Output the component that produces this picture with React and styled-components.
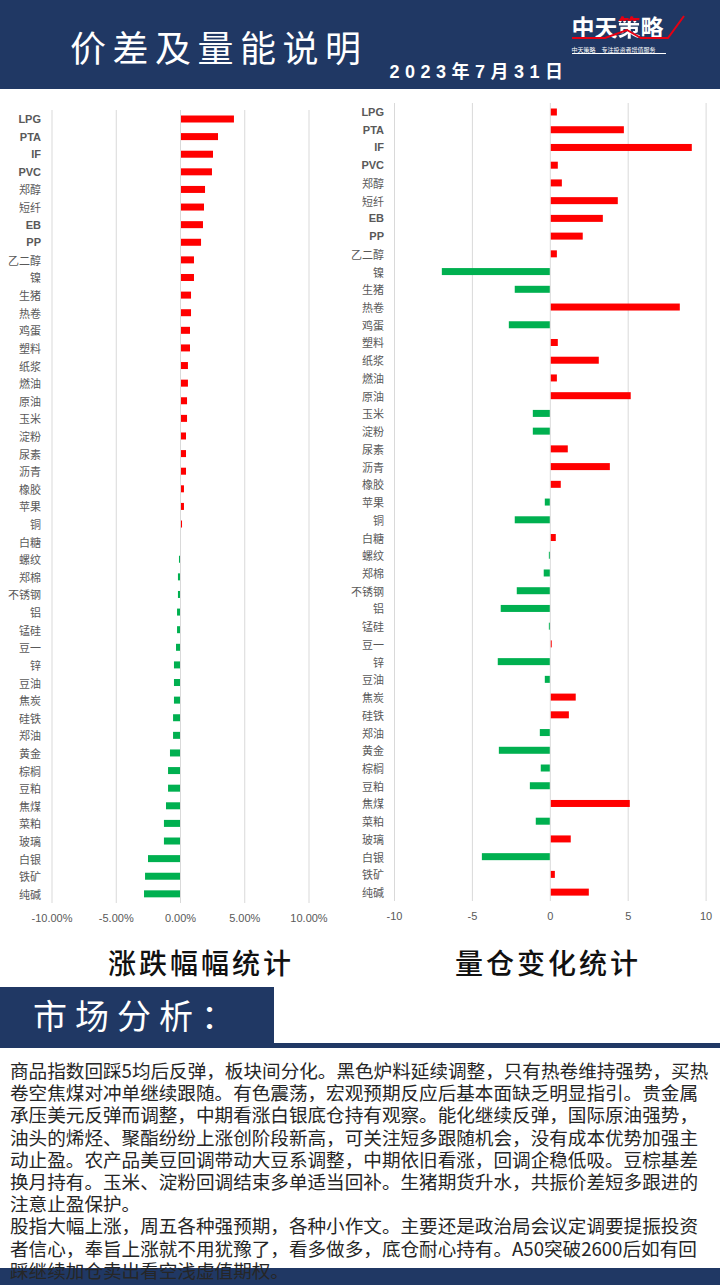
import React from 'react';
import styled, { createGlobalStyle } from 'styled-components';

const NAVY = '#203864';

const GlobalStyle = createGlobalStyle`
  html, body { margin: 0; padding: 0; background: #fff; }
  body { font-family: "Noto Sans CJK SC", "Noto Sans", sans-serif; }
`;

const ITEMS = ['LPG','PTA','IF','PVC','郑醇','短纤','EB','PP','乙二醇','镍','生猪','热卷','鸡蛋','塑料','纸浆','燃油','原油','玉米','淀粉','尿素','沥青','橡胶','苹果','铜','白糖','螺纹','郑棉','不锈钢','铝','锰硅','豆一','锌','豆油','焦炭','硅铁','郑油','黄金','棕榈','豆粕','焦煤','菜粕','玻璃','白银','铁矿','纯碱'];

const CHANGE = [4.12,2.88,2.49,2.41,1.87,1.79,1.71,1.56,1.01,1.01,0.78,0.78,0.7,0.7,0.54,0.54,0.47,0.47,0.39,0.39,0.39,0.23,0.23,0.08,0,-0.08,-0.16,-0.16,-0.23,-0.23,-0.31,-0.47,-0.47,-0.47,-0.54,-0.54,-0.78,-0.93,-0.93,-1.09,-1.25,-1.25,-2.49,-2.72,-2.8];

const VOLUME = [0.39,4.69,9.05,0.45,0.71,4.3,3.34,2.05,0.39,-6.93,-2.25,8.28,-2.63,0.45,3.08,0.39,5.13,-1.09,-1.09,1.09,3.79,0.64,-0.32,-2.25,0.32,-0.06,-0.39,-2.12,-3.15,-0.06,0.06,-3.34,-0.32,1.6,1.16,-0.64,-3.27,-0.58,-1.28,5.07,-0.9,1.28,-4.36,0.26,2.44];

const LEFT_CHART = {
  viewX: 0,
  zero: 180.5,
  scale: 12.85,
  first: 119,
  pitch: 17.61,
  top: 110,
  bottom: 903,
  labelX: 41,
  tickY: 918,
  ticks: [
    { v: -10, label: '-10.00%' },
    { v: -5, label: '-5.00%' },
    { v: 0, label: '0.00%' },
    { v: 5, label: '5.00%' },
    { v: 10, label: '10.00%' },
  ],
  values: CHANGE,
};

const RIGHT_CHART = {
  viewX: 360,
  zero: 550.3,
  scale: 15.58,
  first: 112,
  pitch: 17.73,
  top: 103,
  bottom: 901,
  labelX: 384,
  tickY: 916,
  ticks: [
    { v: -10, label: '-10' },
    { v: -5, label: '-5' },
    { v: 0, label: '0' },
    { v: 5, label: '5' },
    { v: 10, label: '10' },
  ],
  values: VOLUME,
};

const Page = styled.div`
  width: 720px;
  height: 1285px;
  overflow: hidden;
  display: flex;
  flex-direction: column;
  background: #fff;
`;

const Header = styled.header`
  height: 89px;
  flex-shrink: 0;
  background: ${NAVY};
  display: flex;
  align-items: flex-start;
`;

const Title = styled.h1`
  margin: 26px 0 0 70px;
  font-size: 36px;
  line-height: 40px;
  font-weight: 400;
  letter-spacing: 6.5px;
  color: #fff;
  white-space: nowrap;
`;

const DateText = styled.div`
  margin: 62px 0 0 22px;
  font-family: "Liberation Sans", "Noto Sans CJK SC", sans-serif;
  font-weight: 700;
  font-size: 18px;
  line-height: 20px;
  letter-spacing: 5.5px;
  color: #fff;
  white-space: nowrap;
`;

const Logo = styled.div`
  position: relative;
  margin: 13px 34px 0 auto;
  width: 118px;
  height: 44px;
  padding-left: 3px;
  box-sizing: border-box;
`;

const LogoMark = styled.div`
  font-size: 23px;
  line-height: 26px;
  font-weight: 700;
  color: #fff;
  white-space: nowrap;
`;

const LogoAccent = styled.span`
  background: linear-gradient(to bottom, #e60012 0 34%, #fff 34%);
  -webkit-background-clip: text;
  background-clip: text;
  color: transparent;
`;

const LogoLine = styled.svg`
  position: absolute;
  left: 0;
  top: 0;
  width: 118px;
  height: 44px;
  overflow: visible;
`;

const LogoTagline = styled.div`
  margin-top: 7px;
  width: 94px;
  font-size: 6px;
  line-height: 7px;
  color: #fff;
  white-space: nowrap;
  border-bottom: 1px solid #fff;
`;

const ChartsRow = styled.section`
  display: flex;
  flex-shrink: 0;
`;

const ChartPanel = styled.div`
  width: 360px;
  display: flex;
  flex-direction: column;
`;

const ChartSvg = styled.svg`
  display: block;
  width: 360px;
  height: 846px;
  overflow: visible;
`;

const ChartTitle = styled.h2`
  margin: 0;
  padding: 7px 0 0 ${(p) => p.$indent}px;
  font-size: 28px;
  line-height: 40px;
  letter-spacing: 3px;
  font-weight: 500;
  color: #111;
  white-space: nowrap;
`;

const SectionBar = styled.div`
  margin-top: 5px;
  height: 61px;
  box-sizing: border-box;
  border-bottom: 5px solid ${NAVY};
  display: flex;
  flex-shrink: 0;
`;

const SectionTitle = styled.h2`
  margin: 0;
  width: 274px;
  box-sizing: border-box;
  padding-left: 33px;
  background: ${NAVY};
  color: #fff;
  font-size: 34px;
  line-height: 56px;
  font-weight: 400;
  letter-spacing: 8px;
  white-space: nowrap;
`;

const Analysis = styled.section`
  position: relative;
  z-index: 1;
  height: 220px;
  flex-shrink: 0;
  box-sizing: border-box;
  padding: 11px 7px 0 10px;
`;

const Paragraph = styled.p`
  margin: 0;
  font-size: 18.6px;
  line-height: 22.2px;
  color: #262626;
`;

const Footer = styled.footer`
  height: 17px;
  flex-shrink: 0;
  background: ${NAVY};
`;

function BarChart({ config }) {
  const { viewX, zero, scale, first, pitch, top, bottom, labelX, tickY, ticks, values } = config;
  return (
    <ChartSvg viewBox={`${viewX} 89 360 846`}>
      {ticks.map((t) => (
        <line
          key={`g${t.v}`}
          x1={zero + t.v * scale}
          x2={zero + t.v * scale}
          y1={top}
          y2={bottom}
          stroke="#d9d9d9"
          strokeWidth="1"
        />
      ))}
      {ITEMS.map((name, i) => {
        const cy = first + i * pitch;
        const v = values[i];
        const w = Math.abs(v) * scale;
        const latin = /^[A-Z]+$/.test(name);
        return (
          <g key={name}>
            <text
              x={labelX}
              y={cy}
              textAnchor="end"
              dominantBaseline="central"
              fontSize="11"
              fontWeight={latin ? 700 : 400}
              fill="#595959"
              fontFamily={latin ? '"Liberation Sans", sans-serif' : '"Noto Sans CJK SC", sans-serif'}
            >
              {name}
            </text>
            {v !== 0 && (
              <rect
                x={v > 0 ? zero + 0.5 : zero - 0.5 - w}
                y={cy - 3.5}
                width={Math.max(w, 0.8)}
                height="7"
                fill={v > 0 ? '#ff0000' : '#00b050'}
              />
            )}
          </g>
        );
      })}
      {ticks.map((t) => (
        <text
          key={`t${t.v}`}
          x={zero + t.v * scale}
          y={tickY}
          textAnchor="middle"
          dominantBaseline="central"
          fontSize="11"
          fill="#595959"
          fontFamily='"Liberation Sans", sans-serif'
        >
          {t.label}
        </text>
      ))}
    </ChartSvg>
  );
}

export default function App() {
  return (
    <Page>
      <GlobalStyle />
      <Header>
        <Title>价差及量能说明</Title>
        <DateText>2023年7月31日</DateText>
        <Logo>
          <LogoMark>
            中天<LogoAccent>策</LogoAccent>略
          </LogoMark>
          <LogoTagline>中天策略　专注投资者增值服务</LogoTagline>
          <LogoLine viewBox="0 0 118 44">
            <polyline
              points="3,25 36,25 58,17 72,25 99,25 115,3"
              fill="none"
              stroke="#e60012"
              strokeWidth="2"
              strokeLinejoin="miter"
            />
          </LogoLine>
        </Logo>
      </Header>

      <ChartsRow>
        <ChartPanel>
          <BarChart config={LEFT_CHART} />
          <ChartTitle $indent={108}>涨跌幅幅统计</ChartTitle>
        </ChartPanel>
        <ChartPanel>
          <BarChart config={RIGHT_CHART} />
          <ChartTitle $indent={95}>量仓变化统计</ChartTitle>
        </ChartPanel>
      </ChartsRow>

      <SectionBar>
        <SectionTitle>市场分析：</SectionTitle>
      </SectionBar>

      <Analysis>
        <Paragraph>
          商品指数回踩5均后反弹，板块间分化。黑色炉料延续调整，只有热卷维持强势，买热卷空焦煤对冲单继续跟随。有色震荡，宏观预期反应后基本面缺乏明显指引。贵金属承压美元反弹而调整，中期看涨白银底仓持有观察。能化继续反弹，国际原油强势，油头的烯烃、聚酯纷纷上涨创阶段新高，可关注短多跟随机会，没有成本优势加强主动止盈。农产品美豆回调带动大豆系调整，中期依旧看涨，回调企稳低吸。豆棕基差换月持有。玉米、淀粉回调结束多单适当回补。生猪期货升水，共振价差短多跟进的注意止盈保护。
        </Paragraph>
        <Paragraph>
          股指大幅上涨，周五各种强预期，各种小作文。主要还是政治局会议定调要提振投资者信心，奉旨上涨就不用犹豫了，看多做多，底仓耐心持有。A50突破2600后如有回踩继续加仓卖出看空浅虚值期权。
        </Paragraph>
      </Analysis>

      <Footer />
    </Page>
  );
}
